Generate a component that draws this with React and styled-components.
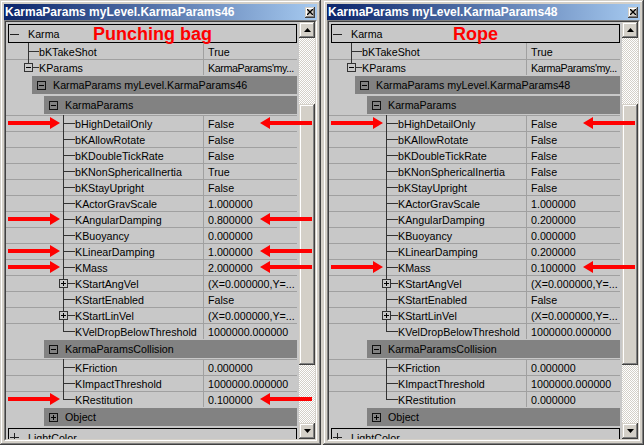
import React from "react";
import styled, { createGlobalStyle } from "styled-components";

const GlobalStyle = createGlobalStyle`
  html, body {
    margin: 0;
    padding: 0;
    background: #d4d0c8;
    overflow: hidden;
  }
  body {
    font-family: "Liberation Sans", Arial, sans-serif;
    font-size: 10.7px;
    color: #000;
  }
`;

const ROW_BG = "#c8c8c8";
const LINE = "#a0a0a0";
const TREE = "#333";

const Desktop = styled.div`
  display: flex;
  gap: 2px;
  width: 644px;
  height: 445px;
`;

const Window = styled.section`
  box-sizing: border-box;
  width: 321px;
  height: 445px;
  padding: 4px;
  display: flex;
  flex-direction: column;
  background: #d4d0c8;
  box-shadow: inset -1px -1px 0 #404040, inset 1px 1px 0 #d4d0c8,
    inset -2px -2px 0 #808080, inset 2px 2px 0 #fff;
`;

const TitleBar = styled.header`
  flex: none;
  height: 16px;
  display: flex;
  align-items: center;
  justify-content: space-between;
  padding: 0 2px 0 1px;
  background: linear-gradient(to right, #0a246a, #a6caf0);
  color: #fff;
  font-weight: bold;
  font-size: 12px;
  white-space: nowrap;
`;

const Raised = styled.div`
  background: #d4d0c8;
  box-shadow: inset -1px -1px 0 #404040, inset 1px 1px 0 #d4d0c8,
    inset -2px -2px 0 #808080, inset 2px 2px 0 #fff;
`;

const CloseButton = styled(Raised)`
  width: 10px;
  height: 11px;
  display: flex;
  align-items: center;
  justify-content: center;
`;

const Sunken = styled.div`
  flex: 1;
  min-height: 0;
  display: flex;
  border: 1px solid;
  border-color: #808080 #fff #fff #808080;
`;

const Panel = styled.div`
  flex: 1;
  min-width: 0;
  display: flex;
  overflow: hidden;
  border: 1px solid;
  border-color: #404040 #d4d0c8 #d4d0c8 #404040;
  background: ${ROW_BG};
`;

const List = styled.div`
  flex: 1;
  min-width: 0;
  padding-right: 2px;
`;

const ScrollBar = styled.div`
  flex: none;
  width: 16px;
  display: flex;
  flex-direction: column;
`;

const ScrollButton = styled(Raised)`
  flex: none;
  height: 16px;
  display: flex;
  align-items: center;
  justify-content: center;
`;

const Track = styled.div`
  flex: 1;
  padding-top: 66px;
  background: repeating-conic-gradient(#fff 0 25%, #d4d0c8 0 50%) 0 0 / 2px 2px;
`;

const Thumb = styled(Raised)`
  height: 261px;
`;

const RootRow = styled.div`
  box-sizing: border-box;
  padding: ${(p) => p.$top}px 0 0 2px;
`;

const RootBox = styled.div`
  box-sizing: border-box;
  height: 19px;
  border: 1px solid #000;
  display: grid;
  grid-template-columns: 1fr auto 1fr;
  align-items: center;
  white-space: nowrap;
`;

const RootName = styled.div`
  display: flex;
  align-items: center;
`;

const RedLabel = styled.div`
  color: #ff0000;
  font-weight: bold;
  font-size: 18px;
  line-height: 18px;
`;

const LeafRow = styled.div`
  position: relative;
  display: flex;
  height: 16px;
  line-height: 16px;
  white-space: nowrap;
`;

const NameCell = styled.div`
  flex: none;
  width: 197px;
  display: flex;
  overflow: hidden;
  box-shadow: ${(p) => (p.$first ? "none" : `inset 0 1px 0 ${LINE}`)};
`;

const NameText = styled.span`
  padding-top: 1px;
`;

const ValueCell = styled.div`
  flex: 1;
  min-width: 0;
  overflow: hidden;
  padding: 1px 0 0 4px;
  border-left: 1px solid ${LINE};
  letter-spacing: ${(p) => (p.$tight ? "-0.4px" : "normal")};
  box-shadow: ${(p) => (p.$first ? "none" : `inset 0 1px 0 ${LINE}`)};
`;

const HeaderRow = styled.div`
  box-sizing: border-box;
  height: 20px;
  padding: 1px 0 1px ${(p) => p.$indent}px;
`;

const HeaderBand = styled.div`
  height: 18px;
  display: flex;
  align-items: center;
  gap: 7px;
  padding-left: 5px;
  background: #828282;
  white-space: nowrap;
  overflow: hidden;
`;

const Glyph = styled.svg`
  flex: none;
  display: block;
`;

const ArrowSvg = styled.svg`
  position: absolute;
  top: 2px;
  left: ${(p) => p.$x}px;
  z-index: 2;
  pointer-events: none;
`;

function TreeGlyph({ line, textX, last, expander }) {
  const x = line + 0.5;
  return (
    <Glyph width={textX} height="16" viewBox={`0 0 ${textX} 16`} shapeRendering="crispEdges">
      <path d={`M${x} 0V${last ? 9 : 16}M${line} 8.5H${textX}`} stroke={TREE} fill="none" />
      {expander && (
        <>
          <rect x={line - 3.5} y="4.5" width="8" height="8" fill={ROW_BG} stroke={TREE} />
          <path
            d={`M${line - 2} 8.5H${line + 3}` + (expander === "+" ? `M${x} 6V11` : "")}
            stroke="#000"
          />
        </>
      )}
    </Glyph>
  );
}

function BoxGlyph({ open }) {
  return (
    <Glyph width="9" height="9" viewBox="0 0 9 9" shapeRendering="crispEdges">
      <rect x="0.5" y="0.5" width="8" height="8" fill="none" stroke="#111" />
      <path d={"M2 4.5H7" + (open ? "" : "M4.5 2V7")} stroke="#000" />
    </Glyph>
  );
}

function RootGlyph({ open }) {
  return (
    <Glyph width="19" height="11" viewBox="0 0 19 11" shapeRendering="crispEdges">
      <path d={"M1 5.5H10" + (open ? "" : "M5.5 1V10")} stroke="#222" />
    </Glyph>
  );
}

function Arrow({ x, left }) {
  return (
    <ArrowSvg $x={x} width="52" height="12" viewBox="0 0 52 12">
      <path
        d={left ? "M52 4H10V0L0 6l10 6V8h42z" : "M0 4h42V0l10 6-10 6V8H0z"}
        fill="#ff0000"
      />
    </ArrowSvg>
  );
}

function Leaf({ name, value, line, textX, last, expander, arrow, first, tight }) {
  return (
    <LeafRow>
      <NameCell $first={first}>
        <TreeGlyph line={line} textX={textX} last={last} expander={expander} />
        <NameText>{name}</NameText>
      </NameCell>
      <ValueCell $first={first} $tight={tight}>
        {value}
      </ValueCell>
      {arrow && (
        <>
          <Arrow x={2} />
          <Arrow x={254} left />
        </>
      )}
    </LeafRow>
  );
}

function Header({ indent, open, children }) {
  return (
    <HeaderRow $indent={indent}>
      <HeaderBand>
        <BoxGlyph open={open} />
        <span>{children}</span>
      </HeaderBand>
    </HeaderRow>
  );
}

function Triangle({ up }) {
  return (
    <Glyph width="7" height="4" viewBox="0 0 7 4">
      <path d={up ? "M0 4h7L3.5 0z" : "M0 0h7L3.5 4z"} fill="#000" />
    </Glyph>
  );
}

function PropertyWindow({ data }) {
  const n = data.params.length;
  const c = data.collision.length;
  return (
    <Window>
      <TitleBar>
        <span>{data.title}</span>
        <CloseButton>
          <Glyph width="6" height="6" viewBox="0 0 6 6">
            <path d="M0 0L6 6M6 0L0 6" stroke="#000" strokeWidth="1.3" />
          </Glyph>
        </CloseButton>
      </TitleBar>
      <Sunken>
        <Panel>
          <List>
            <RootRow $top={2}>
              <RootBox>
                <RootName>
                  <RootGlyph open />
                  Karma
                </RootName>
                <RedLabel>{data.label}</RedLabel>
                <span />
              </RootBox>
            </RootRow>
            <Leaf first name="bKTakeShot" value="True" line={22} textX={33} />
            <Leaf
              name="KParams"
              value="KarmaParams'my..."
              tight
              line={22}
              textX={33}
              last
              expander="-"
            />
            <Header indent={26} open>
              {data.title}
            </Header>
            <Header indent={38} open>
              KarmaParams
            </Header>
            {data.params.map(([name, value, arrow, exp], i) => (
              <Leaf
                key={name}
                name={name}
                value={value}
                arrow={arrow}
                expander={exp}
                line={57}
                textX={69}
                last={i === n - 1}
              />
            ))}
            <Header indent={38} open>
              KarmaParamsCollision
            </Header>
            {data.collision.map(([name, value, arrow], i) => (
              <Leaf
                key={name}
                name={name}
                value={value}
                arrow={arrow}
                line={57}
                textX={69}
                last={i === c - 1}
              />
            ))}
            <Header indent={38}>Object</Header>
            <RootRow $top={1}>
              <RootBox>
                <RootName>
                  <RootGlyph />
                  LightColor
                </RootName>
              </RootBox>
            </RootRow>
          </List>
          <ScrollBar>
            <ScrollButton>
              <Triangle up />
            </ScrollButton>
            <Track>
              <Thumb />
            </Track>
            <ScrollButton>
              <Triangle />
            </ScrollButton>
          </ScrollBar>
        </Panel>
      </Sunken>
    </Window>
  );
}

const vec = "(X=0.000000,Y=...";

const windows = [
  {
    title: "KarmaParams myLevel.KarmaParams46",
    label: "Punching bag",
    params: [
      ["bHighDetailOnly", "False", true],
      ["bKAllowRotate", "False"],
      ["bKDoubleTickRate", "False"],
      ["bKNonSphericalInertia", "True"],
      ["bKStayUpright", "False"],
      ["KActorGravScale", "1.000000"],
      ["KAngularDamping", "0.800000", true],
      ["KBuoyancy", "0.000000"],
      ["KLinearDamping", "1.000000", true],
      ["KMass", "2.000000", true],
      ["KStartAngVel", vec, false, "+"],
      ["KStartEnabled", "False"],
      ["KStartLinVel", vec, false, "+"],
      ["KVelDropBelowThreshold", "1000000.000000"],
    ],
    collision: [
      ["KFriction", "0.000000"],
      ["KImpactThreshold", "1000000.000000"],
      ["KRestitution", "0.100000", true],
    ],
  },
  {
    title: "KarmaParams myLevel.KarmaParams48",
    label: "Rope",
    params: [
      ["bHighDetailOnly", "False", true],
      ["bKAllowRotate", "False"],
      ["bKDoubleTickRate", "False"],
      ["bKNonSphericalInertia", "False"],
      ["bKStayUpright", "False"],
      ["KActorGravScale", "1.000000"],
      ["KAngularDamping", "0.200000"],
      ["KBuoyancy", "0.000000"],
      ["KLinearDamping", "0.200000"],
      ["KMass", "0.100000", true],
      ["KStartAngVel", vec, false, "+"],
      ["KStartEnabled", "False"],
      ["KStartLinVel", vec, false, "+"],
      ["KVelDropBelowThreshold", "1000000.000000"],
    ],
    collision: [
      ["KFriction", "0.000000"],
      ["KImpactThreshold", "1000000.000000"],
      ["KRestitution", "0.000000"],
    ],
  },
];

export default function App() {
  return (
    <>
      <GlobalStyle />
      <Desktop>
        {windows.map((w) => (
          <PropertyWindow key={w.title} data={w} />
        ))}
      </Desktop>
    </>
  );
}
